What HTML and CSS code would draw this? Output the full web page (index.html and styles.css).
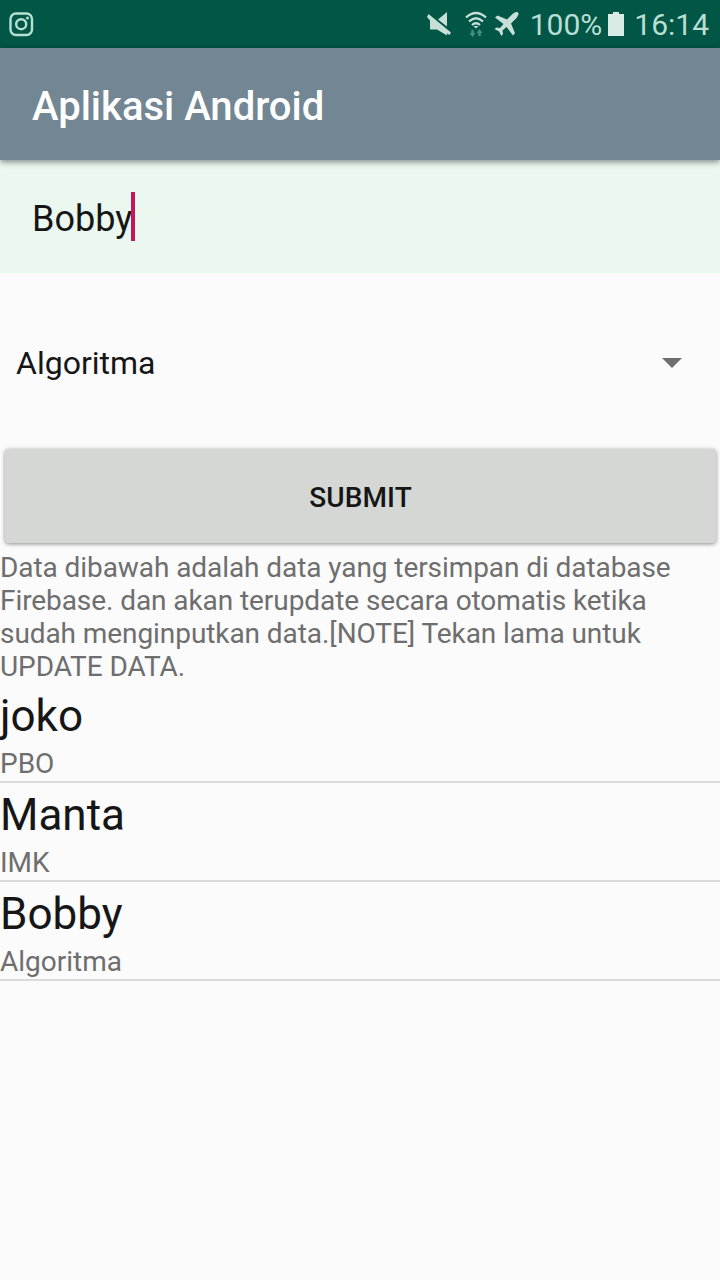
FILE: index.html
```html
<!DOCTYPE html>
<html lang="id">
<head>
<meta charset="utf-8">
<title>Aplikasi Android</title>
<link rel="stylesheet" href="styles.css">
</head>
<body>
<div class="status">
  <svg class="insta" width="26" height="26" viewBox="0 0 26 26" fill="none" stroke="#b5e0d3" stroke-width="2.4"><rect x="2.500" y="2.500" width="21.500" height="21.500" rx="5.500"/><circle cx="13.200" cy="13.200" r="5"/><circle cx="19.500" cy="7" r="1.500" fill="#b5e0d3" stroke="none"/></svg>
  <div class="status-right">
    <svg class="mute" width="26" height="26" viewBox="0 0 26 26" fill="#c6e0d8"><path d="M12 8.500 21 1V15.500z"/><path d="M2.500 3 25 21.500 23.500 24 21 22.500V24.500L11 18.500H4V9.500L1 6z"/></svg>
    <svg class="wifi" width="24" height="28" viewBox="0 0 24 28" fill="none" stroke="#c6e0d8" stroke-width="2.3"><path d="M2 7.500q10-9 20 0M5 11.500q7-6.500 14 0M8 15q4-3.500 8 0"/><path d="M9.500 16h5L12 18.500z" fill="#c6e0d8" stroke="none"/><path d="M8.500 20v4M15.500 26v-4" stroke="#46907e" stroke-width="2.500"/><path d="M5.500 23h6l-3 4zM12.500 23h6l-3-4z" fill="#46907e" stroke="none"/></svg>
    <svg class="plane" width="26" height="26" viewBox="0 0 26 26" fill="#c6e0d8"><path d="M24 1.500C25.500 3 23.500 6 22 7.500L17 12.500 21 22 19 24.500 12.500 16 8.500 19.500 9 23 7.500 25 5 20.500 .5 18 2.500 16.500 6 17 9.500 13 1 6.500 3.500 4.500 13 8.500 18 3.500C20 1.500 22.500 .5 24 1.500z"/></svg>
    <span class="percent">100%</span>
    <svg class="battery" width="16" height="24" viewBox="0 0 16 24" fill="#d9ebe4"><path d="M5 0h6v2h5v22H0V2h5z"/></svg>
    <span class="clock">16:14</span>
  </div>
</div>
<header class="appbar">Aplikasi Android</header>
<div class="name-field"><span>Bobby</span><i class="caret"></i></div>
<div class="spinner"><span>Algoritma</span><i class="arrow"></i></div>
<button class="submit">SUBMIT</button>
<p class="note">Data dibawah adalah data yang tersimpan di database<br>Firebase. dan akan terupdate secara otomatis ketika<br>sudah menginputkan data.[NOTE] Tekan lama untuk<br>UPDATE DATA.</p>
<ul class="list">
  <li><div class="title">joko</div><div class="sub">PBO</div></li>
  <li><div class="title">Manta</div><div class="sub">IMK</div></li>
  <li><div class="title">Bobby</div><div class="sub">Algoritma</div></li>
</ul>
</body>
</html>
```
FILE: styles.css
```css
* { box-sizing: border-box; }
body { margin: 0; width: 720px; height: 1280px; overflow: hidden; background: #fbfbfb; font-family: Roboto, sans-serif; color: #161616; }
.status { height: 48px; background: #015645; color: #b9ded3; display: flex; align-items: center; justify-content: space-between; padding: 0 11px 0 8px; font-size: 30px; }
.status-right { display: flex; align-items: center; }
.mute { margin-right: 12px; }
.wifi { margin-right: 6px; }
.plane { margin-right: 10px; }
.battery { margin: 0 10px 0 6px; }
.appbar { position: relative; height: 112px; background: #738694; color: #fff; font-size: 40px; font-weight: 500; line-height: 118px; padding-left: 32px; box-shadow: 0 2px 6px rgba(0,0,0,.45); }
.name-field { height: 113px; background: #eaf8f0; display: flex; align-items: center; padding: 0 32px; font-size: 36px; line-height: 48px; }
.name-field span { padding-top: 4px; }
.caret { width: 4px; height: 49px; margin-left: -1px; background: #c2185b; }
.spinner { height: 176px; display: flex; align-items: center; justify-content: space-between; padding: 4px 38px 0 16px; font-size: 32px; }
.arrow { border: 10px solid transparent; border-top-color: #6e6e6e; border-bottom: 0; }
.submit { display: block; width: 711px; height: 94px; margin: 0 4px 0 5px; padding: 3px 0 0; border: 0; border-radius: 4px; background: #d5d7d5; color: #161616; font: 500 28px Roboto, sans-serif; letter-spacing: .1px; box-shadow: 0 1px 4px rgba(0,0,0,.45); }
.note { margin: 8px 0 0; font-size: 28px; line-height: 33px; letter-spacing: -.075px; color: #6e6e6e; white-space: nowrap; }
.list { margin: 1px 0 0; padding: 0; list-style: none; }
.list li { height: 99px; padding-top: 3px; border-bottom: 2px solid #dadada; }
.title { margin-bottom: 2px; font-size: 44px; line-height: 58px; }
.sub { font-size: 28px; line-height: 33px; color: #6e6e6e; }
```
